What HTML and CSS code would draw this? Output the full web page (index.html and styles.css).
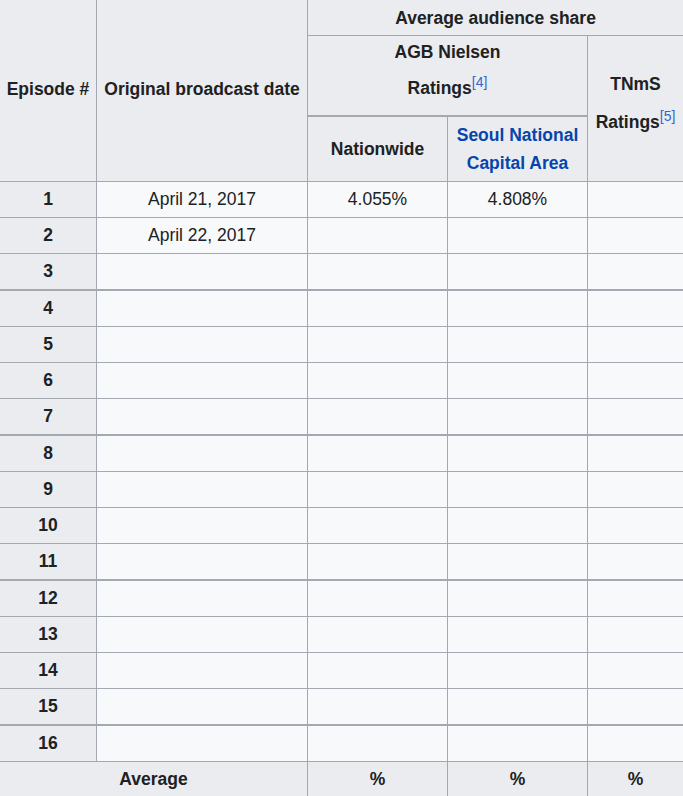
FILE: index.html
```html
<!DOCTYPE html>
<html lang="en">
<head>
<meta charset="utf-8">
<title>Ratings</title>
<link rel="stylesheet" href="styles.css">
</head>
<body>
<table class="wikitable">
  <colgroup>
    <col class="c-ep">
    <col class="c-date">
    <col class="c-nat">
    <col class="c-seoul">
    <col class="c-tnms">
  </colgroup>
  <thead>
    <tr>
      <th rowspan="3" class="nowrap">Episode #</th>
      <th rowspan="3" class="nowrap">Original broadcast date</th>
      <th colspan="3">Average audience share</th>
    </tr>
    <tr>
      <th colspan="2" class="thick agb">AGB Nielsen<span class="l2">Ratings<sup class="ref"><a>[4]</a></sup></span></th>
      <th rowspan="2" class="tnms">TNmS<span class="l2">Ratings<sup class="ref"><a>[5]</a></sup></span></th>
    </tr>
    <tr>
      <th>Nationwide</th>
      <th class="seoul"><a class="link">Seoul National<br>Capital Area</a></th>
    </tr>
  </thead>
  <tbody>
    <tr><th>1</th><td>April 21, 2017</td><td>4.055%</td><td>4.808%</td><td></td></tr>
    <tr><th>2</th><td>April 22, 2017</td><td></td><td></td><td></td></tr>
    <tr class="thick"><th>3</th><td></td><td></td><td></td><td></td></tr>
    <tr><th>4</th><td></td><td></td><td></td><td></td></tr>
    <tr><th>5</th><td></td><td></td><td></td><td></td></tr>
    <tr><th>6</th><td></td><td></td><td></td><td></td></tr>
    <tr class="thick"><th>7</th><td></td><td></td><td></td><td></td></tr>
    <tr><th>8</th><td></td><td></td><td></td><td></td></tr>
    <tr><th>9</th><td></td><td></td><td></td><td></td></tr>
    <tr><th>10</th><td></td><td></td><td></td><td></td></tr>
    <tr class="thick"><th>11</th><td></td><td></td><td></td><td></td></tr>
    <tr><th>12</th><td></td><td></td><td></td><td></td></tr>
    <tr><th>13</th><td></td><td></td><td></td><td></td></tr>
    <tr><th>14</th><td></td><td></td><td></td><td></td></tr>
    <tr class="thick"><th>15</th><td></td><td></td><td></td><td></td></tr>
    <tr><th>16</th><td></td><td></td><td></td><td></td></tr>
    <tr><th colspan="2">Average</th><th>%</th><th>%</th><th>%</th></tr>
  </tbody>
</table>
</body>
</html>
```
FILE: styles.css
```css
html, body {
  margin: 0;
  padding: 0;
  background: #ffffff;
}

.wikitable {
  margin: -1px 0 0 -1px;
  width: 684px;
  table-layout: fixed;
  border-collapse: collapse;
  background: #f8f9fa;
  color: #202122;
  font-family: "Liberation Sans", Arial, sans-serif;
  font-size: 17.5px;
  line-height: 1.6;
}

.c-ep { width: 97px; }
.c-date { width: 211px; }
.c-nat { width: 140px; }
.c-seoul { width: 140px; }
.c-tnms { width: 96px; }

.wikitable th,
.wikitable td {
  border: 1px solid #a2a9b1;
  padding: 0.2em 0.4em;
  text-align: center;
  vertical-align: middle;
  height: 28px;
}

.wikitable tbody th,
.wikitable tbody td {
  padding-top: 3px;
  padding-bottom: 4px;
}

.wikitable th {
  background: #eaecf0;
  font-weight: bold;
}

.wikitable th.nowrap {
  white-space: nowrap;
  padding: 0 4px 4px;
}

.wikitable th.thick {
  border-bottom-width: 2px;
}

.wikitable tr.thick > th,
.wikitable tr.thick > td {
  border-bottom-width: 2px;
}

.l2 {
  display: block;
  padding-top: 8px;
}

.wikitable th.agb {
  padding-top: 2px;
  padding-bottom: 13px;
}

.wikitable th.tnms {
  padding-top: 3px;
  padding-bottom: 14px;
}

.tnms .l2 {
  padding-top: 10px;
}

.wikitable th.seoul {
  padding-top: 4px;
  padding-bottom: 4px;
}

.ref {
  font-size: 80%;
  line-height: 1;
  vertical-align: super;
  font-weight: normal;
}

.ref a {
  color: #3366cc;
}

.link {
  color: #0645ad;
}
```
